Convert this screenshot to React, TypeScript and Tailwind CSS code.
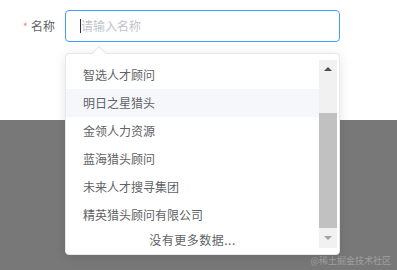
const companies = [
  "智选人才顾问",
  "明日之星猎头",
  "金领人力资源",
  "蓝海猎头顾问",
  "未来人才搜寻集团",
  "精英猎头顾问有限公司",
];

const font = "font-['Helvetica_Neue','Noto_Sans_CJK_SC',sans-serif]";

export default function App() {
  const hovered = 1;

  return (
    <div className={`relative w-[397px] h-[270px] flex flex-col overflow-hidden ${font}`}>
      {/* Form area */}
      <div className="h-[120px] bg-white">
        <div className="flex items-center pt-[10px]">
          <label className="w-[65px] pr-[10px] flex justify-end items-center text-[12px] text-[#606266]">
            <span className="text-[#f78989] mr-[3px] text-[11px]">*</span>
            名称
          </label>
          <div className="w-[275px] h-[32px] border border-[#409eff] rounded-[4px] flex items-center pl-[14px] text-[12px]">
            <span className="w-px h-[14px] bg-[#303133]" />
            <span className="text-[#c0c4cc]">请输入名称</span>
          </div>
        </div>
      </div>

      {/* Overlay */}
      <div className="flex-1 bg-[#787878]" />

      {/* Dropdown */}
      <div className="absolute left-[65px] top-[53px] w-[275px] h-[202px] bg-white rounded-[4px] border border-[#e4e7ed] shadow-[0_2px_12px_rgba(0,0,0,0.1)] flex py-[6px]">
        <div className="absolute -top-[6px] left-[28px] w-[10px] h-[10px] bg-white border-l border-t border-[#e4e7ed] rotate-45" />
        <ul className="flex-1 pt-[1px]">
          {companies.map((name, i) => (
            <li
              key={name}
              className={`h-[28px] flex items-center pl-[17px] text-[12px] text-[#606266] ${
                i === hovered ? "bg-[#f5f7fa]" : ""
              }`}
            >
              {name}
            </li>
          ))}
          <li className="h-[22px] flex items-center justify-center text-[12px] text-[#606266] tracking-[0.5px]">
            没有更多数据...
          </li>
        </ul>

        {/* Scrollbar */}
        <div className="w-[18px] mr-[2px] bg-[#f1f1f1] flex flex-col">
          <div className="h-[17px] flex items-center justify-center">
            <span className="w-0 h-0 border-l-[4px] border-r-[4px] border-b-[4px] border-l-transparent border-r-transparent border-b-[#505050]" />
          </div>
          <div className="h-[36px]" />
          <div className="h-[115px] bg-[#c1c1c1]" />
          <div className="flex-1 flex items-center justify-center">
            <span className="w-0 h-0 border-l-[4px] border-r-[4px] border-t-[4px] border-l-transparent border-r-transparent border-t-[#a3a3a3]" />
          </div>
        </div>
      </div>

      {/* Watermark */}
      <span className="absolute right-[6px] bottom-[3px] text-[9px] text-white/30">
        @稀土掘金技术社区
      </span>
    </div>
  );
}
